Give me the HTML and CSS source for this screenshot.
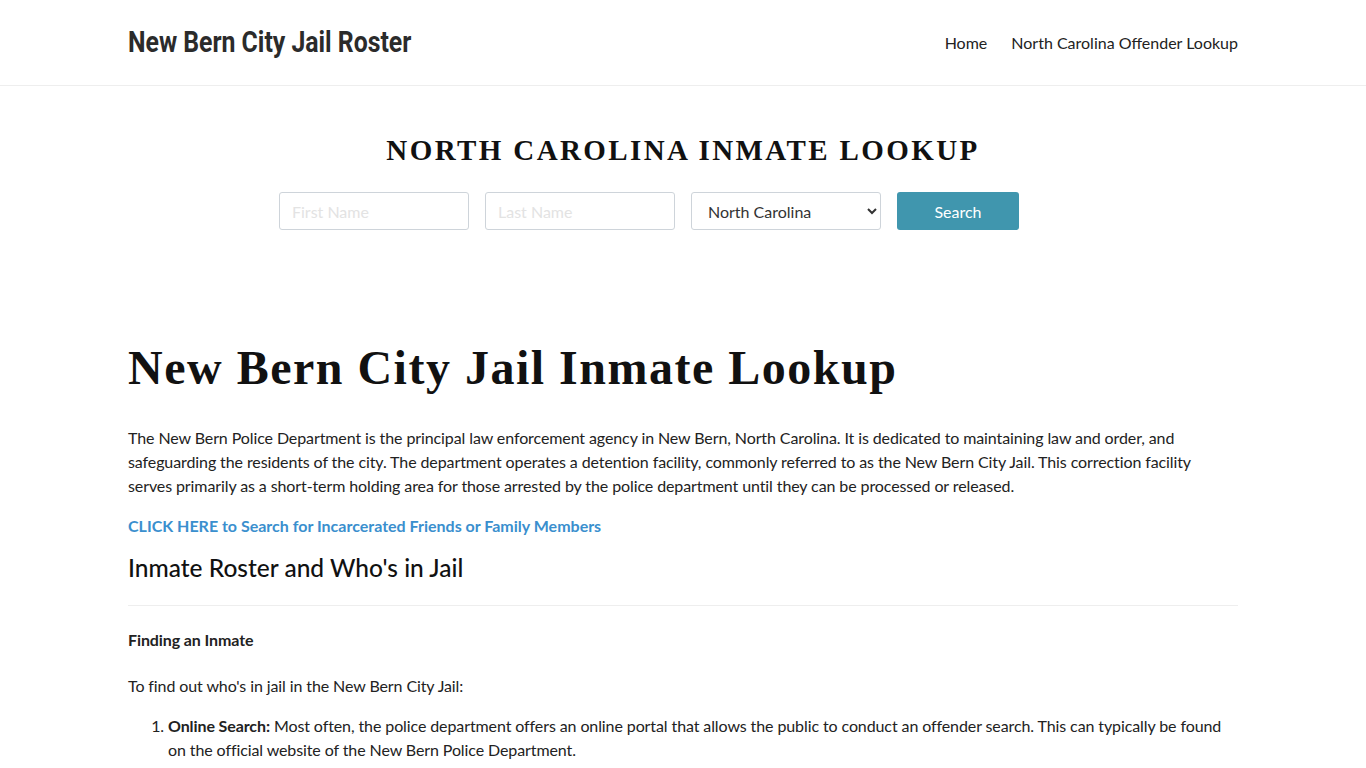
FILE: index.html
```html
<!DOCTYPE html>
<html lang="en">
<head>
<meta charset="utf-8">
<title>New Bern City Jail Roster</title>
<link rel="stylesheet" href="styles.css">
</head>
<body>
<header class="site-header">
  <div class="container header-inner">
    <a class="brand" href="#"><span class="brand-text">New Bern City Jail Roster</span></a>
    <nav class="nav">
      <a href="#">Home</a>
      <a href="#">North Carolina Offender Lookup</a>
    </nav>
  </div>
</header>
<section class="search">
  <h2 class="search-title">NORTH CAROLINA INMATE LOOKUP</h2>
  <form class="search-form">
    <input class="field" type="text" placeholder="First Name">
    <input class="field" type="text" placeholder="Last Name">
    <select class="field select"><option>North Carolina</option></select>
    <button class="btn" type="button">Search</button>
  </form>
</section>
<main class="container content">
  <h1 class="page-title">New Bern City Jail Inmate Lookup</h1>
  <p>The New Bern Police Department is the principal law enforcement agency in New Bern, North Carolina. It is dedicated to maintaining law and order, and safeguarding the residents of the city. The department operates a detention facility, commonly referred to as the New Bern City Jail. This correction facility serves primarily as a short-term holding area for those arrested by the police department until they can be processed or released.</p>
  <p><a class="cta" href="#">CLICK HERE to Search for Incarcerated Friends or Family Members</a></p>
  <h2 class="section-title">Inmate Roster and Who's in Jail</h2>
  <hr class="rule">
  <p class="subhead"><strong>Finding an Inmate</strong></p>
  <p>To find out who's in jail in the New Bern City Jail:</p>
  <ol class="steps">
    <li><strong>Online Search:</strong> Most often, the police department offers an online portal that allows the public to conduct an offender search. This can typically be found on the official website of the New Bern Police Department.</li>
  </ol>
</main>
</body>
</html>
```

FILE: styles.css
```css
* { box-sizing: border-box; }
body {
  margin: 0;
  font-family: Lato, "Open Sans", sans-serif;
  font-size: 16px;
  line-height: 24px;
  color: #222;
  background: #fff;
}
.container {
  width: 1110px;
  margin: 0 auto;
}
.site-header {
  border-bottom: 1px solid #eeeeee;
}
.header-inner {
  height: 85px;
  display: flex;
  align-items: center;
  justify-content: space-between;
}
.brand {
  display: block;
  width: 290px;
  text-decoration: none;
  white-space: nowrap;
  padding-top: 3px;
}
.brand-text {
  display: inline-block;
  font-family: Roboto, "DejaVu Sans Condensed", sans-serif;
  font-weight: 700;
  font-size: 29px;
  color: #2b2b2b;
  transform: scaleX(0.855);
  transform-origin: left center;
}
.nav {
  display: flex;
  gap: 24px;
}
.nav a {
  font-size: 16px;
  color: #222;
  text-decoration: none;
}
.search {
  padding-top: 48px;
  text-align: center;
}
.search-title {
  margin: 0;
  font-family: "Liberation Serif", "Times New Roman", serif;
  font-weight: 700;
  font-size: 29px;
  line-height: 32px;
  letter-spacing: 2.4px;
  color: #111;
}
.search-form {
  margin-top: 26px;
  display: flex;
  justify-content: center;
  gap: 16px;
  padding-right: 68px;
}
.field {
  width: 190px;
  height: 38px;
  border: 1px solid #ced4da;
  border-radius: 3px;
  padding: 0 12px;
  font-family: Lato, sans-serif;
  font-size: 16px;
  color: #444;
  background: #fff;
}
.field::placeholder { color: #e3e3e3; }
.select { padding-left: 12px; color: #333; }
.btn {
  width: 122px;
  height: 38px;
  border: none;
  border-radius: 3px;
  background: #4096ae;
  color: #fff;
  font-family: Lato, sans-serif;
  font-size: 16px;
}
.content {
  padding-top: 110px;
}
.page-title {
  margin: 0 0 30px;
  font-family: "Liberation Serif", "Times New Roman", serif;
  font-weight: 700;
  font-size: 48px;
  line-height: 56px;
  letter-spacing: 1.5px;
  color: #111;
}
.content p,
.steps {
  letter-spacing: -0.1px;
}
.content p {
  margin: 0 0 16px;
}
.cta {
  color: #3a8fce;
  font-weight: 700;
  text-decoration: none;
  letter-spacing: 0;
}
.section-title {
  margin: -4px 0 0;
  font-family: Lato, sans-serif;
  font-size: 24.5px;
  line-height: 36px;
  font-weight: 500;
  color: #111;
}
.rule {
  border: 0;
  border-top: 1px solid #eeeeee;
  margin: 19px 0 22px;
}
.content .subhead {
  margin-bottom: 22px;
}
.steps {
  margin: 0;
  padding-left: 40px;
}
```
